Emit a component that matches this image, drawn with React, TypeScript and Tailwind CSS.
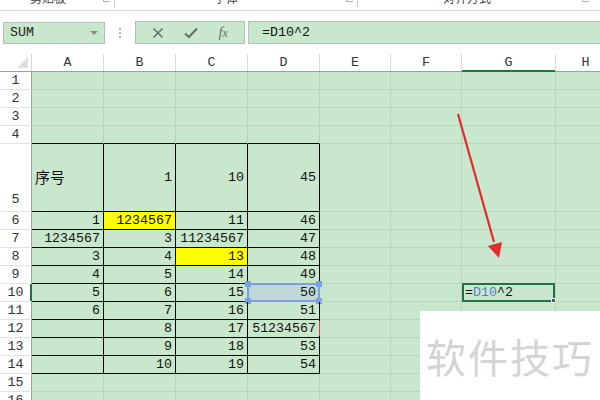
import React from 'react'

const mono = { fontFamily: '"Liberation Mono", "Noto Sans CJK SC", monospace' }
const cjk = { fontFamily: '"Noto Sans CJK SC", "Liberation Sans", sans-serif' }

const cols = [
  { key: 'A', w: 'w-[72px]' },
  { key: 'B', w: 'w-[72px]' },
  { key: 'C', w: 'w-[72px]' },
  { key: 'D', w: 'w-[72px]' },
  { key: 'E', w: 'w-[71px]' },
  { key: 'F', w: 'w-[71px]' },
  { key: 'G', w: 'w-[94px]' },
  { key: 'H', w: 'w-[60px]' },
]

const data: Record<number, string[]> = {
  5: ['序号', '1', '10', '45'],
  6: ['1', '1234567', '11', '46'],
  7: ['1234567', '3', '11234567', '47'],
  8: ['3', '4', '13', '48'],
  9: ['4', '5', '14', '49'],
  10: ['5', '6', '15', '50'],
  11: ['6', '7', '16', '51'],
  12: ['', '8', '17', '51234567'],
  13: ['', '9', '18', '53'],
  14: ['', '10', '19', '54'],
}

const yellow = ['6-1', '8-2']

const Launcher = () => (
  <span className="inline-block w-[7px] h-[6px] border-l border-b border-[#b0b0b0]" />
)

const Cell = ({ row, ci }: { row: number; ci: number }) => {
  const col = cols[ci]
  const inTable = row >= 5 && row <= 14 && ci <= 3
  const topOfTable = row === 4 && ci <= 3
  const val = data[row]?.[ci] ?? ''
  const isYellow = yellow.includes(`${row}-${ci}`)
  const isRef = row === 10 && ci === 3
  const isText = row === 5 && ci === 0
  return (
    <div
      className={`${col.w} relative h-full shrink-0 border-r border-b flex ${
        isText ? 'justify-start pl-[3px]' : 'justify-end pr-[3px]'
      } items-center ${inTable ? 'border-r-black border-b-black' : 'border-r-[#b9d4bb] border-b-[#b9d4bb]'} ${
        topOfTable ? 'border-b-black' : ''
      } ${isYellow ? 'bg-[#ffff00]' : ''} ${isRef ? 'bg-[#c0d8d6]' : ''}`}
    >
      <span
        className={isText ? 'text-[15px] text-[#111]' : 'relative z-10 text-[13.3px] text-[#111] leading-none'}
        style={isText ? cjk : mono}
      >
        {val}
      </span>
      {row === 12 && ci === 3 && (
        <div className="absolute right-[-1px] top-[1px] h-[15px] w-[1px] bg-[#e04040]" />
      )}
      {isRef && (
        <div className="absolute left-[-1px] top-[-1px] right-[-1px] bottom-[-1px] border-2 border-[#7b9fe0]">
          <div className="absolute -left-[4px] -top-[4px] w-[6px] h-[6px] bg-[#7b9fe0]" />
          <div className="absolute -right-[4px] -top-[4px] w-[6px] h-[6px] bg-[#7b9fe0]" />
          <div className="absolute -left-[4px] -bottom-[4px] w-[6px] h-[6px] bg-[#7b9fe0]" />
          <div className="absolute -right-[4px] -bottom-[4px] w-[6px] h-[6px] bg-[#7b9fe0]" />
        </div>
      )}
      {row === 10 && ci === 6 && (
        <div className="absolute left-0 top-[-1px] right-0 bottom-[-1px] border-2 border-[#217346] flex items-center pl-[1px]">
          <span className="text-[13.3px] leading-none" style={mono}>
            <span className="text-[#111]">=</span>
            <span className="text-[#4f80d0]">D10</span>
            <span className="text-[#111]">^2</span>
          </span>
          <div className="absolute -right-[3px] -bottom-[3px] w-[5px] h-[5px] bg-[#217346] border border-white" />
        </div>
      )}
    </div>
  )
}

export default function App() {
  const rows = Array.from({ length: 16 }, (_, i) => i + 1)
  return (
    <div className="w-[600px] h-[400px] overflow-hidden bg-white relative select-none">
      {/* ribbon remnant */}
      <div className="h-[11px] border-b border-[#d5d5d5] relative overflow-hidden text-[12px] text-[#444]" style={cjk}>
        <div className="flex items-end h-full -mt-[3px]">
          <span className="ml-[30px]">剪贴板</span>
          <span className="ml-[37px] mb-[1px]"><Launcher /></span>
          <span className="ml-[4px] h-[12px] border-l border-[#ccc]" />
          <span className="ml-[99px]">字体</span>
          <span className="ml-[108px] mb-[1px]"><Launcher /></span>
          <span className="ml-[4px] h-[12px] border-l border-[#ccc]" />
          <span className="ml-[85px]">对齐方式</span>
          <span className="ml-[91px] mb-[1px]"><Launcher /></span>
        </div>
      </div>

      {/* formula bar */}
      <div className="flex items-center mt-[10px] h-[23px]">
        <div className="ml-[3px] w-[102px] h-[22px] bg-[#c9e7cc] border border-[#b5bfb7] flex items-center justify-between pl-[6px] pr-[6px]">
          <span className="text-[13.3px] text-[#222]" style={mono}>SUM</span>
          <span className="w-0 h-0 border-l-[4px] border-r-[4px] border-t-[4px] border-l-transparent border-r-transparent border-t-[#8a8a8a]" />
        </div>
        <div className="w-[30px] flex flex-col items-center gap-[2px]">
          <span className="w-[2px] h-[2px] bg-[#b5b5b5]" />
          <span className="w-[2px] h-[2px] bg-[#b5b5b5]" />
          <span className="w-[2px] h-[2px] bg-[#b5b5b5]" />
        </div>
        <div className="w-[110px] h-[23px] bg-[#c9e7cc] border border-[#b5bfb7] flex items-center justify-around px-[6px]">
          <svg width="12" height="12" viewBox="0 0 12 12">
            <path d="M1.5 1.5 L10.5 10.5 M10.5 1.5 L1.5 10.5" stroke="#6e6e6e" strokeWidth="1.6" />
          </svg>
          <svg width="14" height="12" viewBox="0 0 14 12">
            <path d="M1 6.5 L5 10 L13 1.5" stroke="#6e6e6e" strokeWidth="2.2" fill="none" />
          </svg>
          <span className="text-[15px] italic text-[#6e6e6e]" style={{ fontFamily: '"Liberation Serif", serif' }}>
            f<span className="text-[12px]">x</span>
          </span>
        </div>
        <div className="ml-[3px] flex-1 h-[23px] bg-[#c9e7cc] border border-[#b5bfb7] border-r-0 flex items-center pl-[13px]">
          <span className="text-[13.3px] text-[#111]" style={mono}>=D10^2</span>
        </div>
      </div>

      {/* sheet */}
      <div className="mt-[10px] relative">
        <div className="flex h-[18px] bg-white border-b border-[#9e9e9e]">
          <div className="w-[32px] shrink-0 relative border-r border-[#d4d4d4]">
            <div
              className="absolute right-[3px] bottom-[3px] w-0 h-0"
              style={{ borderBottom: '11px solid #dedede', borderLeft: '11px solid transparent' }}
            />
          </div>
          {cols.map((c) => (
            <div
              key={c.key}
              className={`${c.w} shrink-0 relative flex items-center justify-center border-r border-[#dadada] text-[13.3px] text-[#333]`}
              style={mono}
            >
              {c.key}
              {c.key === 'G' && <div className="absolute left-0 right-0 bottom-[-1px] h-[2px] bg-[#217346]" />}
            </div>
          ))}
        </div>
        {rows.map((r) => (
          <div key={r} className={`flex ${r === 5 ? 'h-[68px]' : 'h-[18px]'}`}>
            <div
              className={`w-[32px] shrink-0 bg-white border-b border-[#e1e1e1] border-r border-r-[#9e9e9e] relative flex justify-center ${
                r === 5 ? 'items-end pb-[1px]' : 'items-center'
              } text-[13.3px] text-[#333]`}
              style={mono}
            >
              {r}
              {r === 10 && <div className="absolute right-[-1px] top-0 bottom-0 w-[2px] bg-[#217346]" />}
            </div>
            <div className="flex bg-[#c9e7cc]">
              {cols.map((_, ci) => (
                <Cell key={ci} row={r} ci={ci} />
              ))}
            </div>
          </div>
        ))}

        {/* arrow */}
        <svg className="absolute left-0" width="600" height="350" style={{ top: -66 }}>
          <line x1="458" y1="126" x2="494" y2="254" stroke="#e52a2a" strokeWidth="2.2" />
          <polygon points="488,258 502,254 499,270" fill="#e52a2a" />
        </svg>
      </div>

      {/* watermark */}
      <div className="absolute left-[420px] top-[311px] w-[180px] h-[89px] bg-white flex items-center justify-center">
        <span className="text-[40px] text-[#d4d4d4] tracking-[2px]" style={cjk}>软件技巧</span>
      </div>
    </div>
  )
}
